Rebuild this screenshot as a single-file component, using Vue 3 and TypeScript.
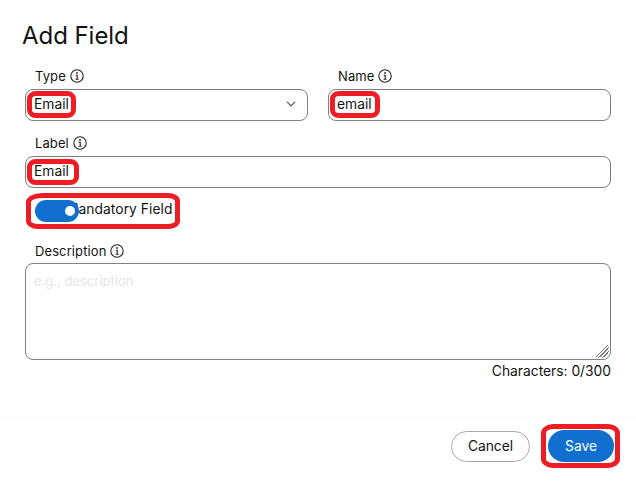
<script setup lang="ts">
import { computed, ref } from 'vue'

const fieldType = ref('Email')
const fieldName = ref('email')
const fieldLabel = ref('Email')
const mandatory = ref(true)
const description = ref('')
const maxLength = 300
const counter = computed(() => `${description.value.length}/${maxLength}`)
</script>

<template>
  <main class="dialog">
    <h1 class="title">Add Field</h1>
    <form class="form" @submit.prevent>
      <div class="row">
        <div class="field">
          <div class="caption raised">
            <span>Type</span>
            <svg class="info" viewBox="0 0 14 14"><circle cx="7" cy="7" r="6.2" /><path d="M5.7 6.2h1.5v4M5.6 10.2h3" /><circle class="dot" cx="7" cy="3.9" r=".9" /></svg>
          </div>
          <div class="control">
            <span class="value">{{ fieldType }}</span>
            <svg class="chevron" viewBox="0 0 10 6"><path d="M1 .8 5 4.8 9 .8" /></svg>
            <span class="mark mark-value"></span>
          </div>
        </div>
        <div class="field">
          <div class="caption raised">
            <span>Name</span>
            <svg class="info" viewBox="0 0 14 14"><circle cx="7" cy="7" r="6.2" /><path d="M5.7 6.2h1.5v4M5.6 10.2h3" /><circle class="dot" cx="7" cy="3.9" r=".9" /></svg>
          </div>
          <div class="control">
            <input v-model="fieldName" class="value" type="text" />
            <span class="mark mark-value mark-name"></span>
          </div>
        </div>
      </div>

      <div class="field label-field">
        <div class="caption raised">
          <span>Label</span>
          <svg class="info" viewBox="0 0 14 14"><circle cx="7" cy="7" r="6.2" /><path d="M5.7 6.2h1.5v4M5.6 10.2h3" /><circle class="dot" cx="7" cy="3.9" r=".9" /></svg>
        </div>
        <div class="control">
          <input v-model="fieldLabel" class="value" type="text" />
          <span class="mark mark-label"></span>
        </div>
      </div>

      <div class="mandatory">
        <span class="mandatory-text">Mandatory Field</span>
        <button class="switch" :class="{ off: !mandatory }" type="button" @click="mandatory = !mandatory"><span class="knob"></span></button>
        <span class="mark mark-mandatory"></span>
      </div>

      <div class="field">
        <div class="caption">
          <span>Description</span>
          <svg class="info" viewBox="0 0 14 14"><circle cx="7" cy="7" r="6.2" /><path d="M5.7 6.2h1.5v4M5.6 10.2h3" /><circle class="dot" cx="7" cy="3.9" r=".9" /></svg>
        </div>
        <div class="area">
          <textarea v-model="description" placeholder="e.g., description" :maxlength="maxLength"></textarea>
          <svg class="grip" viewBox="0 0 15 15"><path d="M1 13 13 1M5 13 13 5M9 13 13 9" /><path d="M3 14 14 3M7 14 14 7" /></svg>
        </div>
        <div class="counter">Characters: {{ counter }}</div>
      </div>
    </form>
    <footer class="footer">
      <button class="btn cancel" type="button">Cancel</button>
      <div class="save-wrap">
        <button class="btn save" type="button">Save</button>
        <span class="mark mark-save"></span>
      </div>
    </footer>
  </main>
</template>

<style>
body {
  margin: 0;
  background: #fff;
}
</style>

<style scoped>
* {
  box-sizing: border-box;
}
.dialog {
  width: 636px;
  height: 485px;
  overflow: hidden;
  background: #fff;
  color: #121212;
  font: 13.8px/20px Inter, sans-serif;
}
.title {
  margin: 0;
  padding: 20px 0 0 22px;
  height: 67px;
  font-size: 24px;
  line-height: 32px;
  font-weight: 400;
  letter-spacing: -0.05px;
}
.form {
  height: 350px;
  padding: 0 25px;
}
.row {
  display: grid;
  grid-template-columns: 283px 283px;
  gap: 20px;
}
.caption {
  display: flex;
  align-items: center;
  gap: 4px;
  height: 22px;
  padding: 0 0 3px 10px;
  font-size: 13px;
  line-height: 18px;
  letter-spacing: 0.1px;
}
.caption.raised {
  padding-bottom: 4px;
}
.info {
  width: 14px;
  height: 14px;
  fill: none;
  stroke: #222;
  stroke-width: 1.1;
}
.info .dot {
  fill: #222;
  stroke: none;
}
.control {
  position: relative;
  display: flex;
  align-items: center;
  justify-content: space-between;
  height: 32px;
  padding: 0 11px 2px 8px;
  border: 1px solid #808080;
  border-radius: 8px;
}
.value {
  min-width: 0;
  padding: 0;
  border: 0;
  outline: 0;
  background: none;
  color: inherit;
  font: inherit;
}
input.value {
  flex: 1;
}
.chevron {
  width: 10px;
  height: 6px;
  fill: none;
  stroke: #555;
  stroke-width: 1.2;
}
.mark {
  position: absolute;
  border: 5px solid #ee1c25;
  border-radius: 9px / 8px;
  pointer-events: none;
}
.mark-value {
  left: 1px;
  top: 1px;
  width: 49px;
  height: 27px;
}
.mark-name {
  width: 50px;
}
.label-field {
  padding-top: 13px;
}
.mark-label {
  left: 1px;
  top: 2px;
  width: 52px;
  height: 26px;
}
.mandatory {
  position: relative;
  height: 53px;
  padding: 12px 0 0 10px;
}
.switch {
  position: relative;
  display: flex;
  align-items: center;
  justify-content: flex-end;
  width: 44px;
  height: 22px;
  padding: 0 4px;
  border: 0;
  border-radius: 11px;
  background: #1170cf;
}
.switch.off {
  justify-content: flex-start;
  background: #808080;
}
.knob {
  width: 10px;
  height: 10px;
  border-radius: 50%;
  background: #fff;
}
.mandatory-text {
  position: absolute;
  left: 41px;
  top: 11px;
  white-space: nowrap;
  letter-spacing: 0.06px;
}
.mark-mandatory {
  left: 1px;
  top: 5px;
  width: 154px;
  height: 36px;
  border-radius: 16px 12px 12px 12px / 9px 8px 8px 8px;
}
.area {
  position: relative;
  height: 97px;
}
textarea {
  display: block;
  width: 100%;
  height: 100%;
  padding: 7px 8px;
  border: 1px solid #808080;
  border-radius: 8px;
  outline: 0;
  resize: none;
  font: 13px/20px Inter, sans-serif;
}
textarea::placeholder {
  color: #e5e5e8;
  opacity: 1;
}
.grip {
  position: absolute;
  right: 1px;
  bottom: 1px;
  width: 15px;
  height: 15px;
  fill: none;
  stroke: #777;
  stroke-width: 1;
}
.counter {
  padding-top: 1px;
  text-align: right;
}
.footer {
  display: flex;
  align-items: flex-start;
  justify-content: flex-end;
  gap: 18px;
  height: 68px;
  padding: 12px 22px 0 0;
  border-top: 1px solid #f8f8f8;
}
.btn {
  padding: 0;
  border: 0;
  border-radius: 16px;
  font: 13.8px/20px Inter, sans-serif;
}
.cancel {
  width: 79px;
  height: 31px;
  margin-top: 1px;
  padding-bottom: 1px;
  border: 1px solid #aaa;
  background: #fff;
  color: #121212;
}
.save-wrap {
  position: relative;
}
.save {
  display: block;
  width: 66px;
  height: 32px;
  background: #1170cf;
  color: #fff;
}
.mark-save {
  left: -7px;
  top: -6px;
  width: 79px;
  height: 44px;
  border-radius: 12px / 9px;
}
</style>
